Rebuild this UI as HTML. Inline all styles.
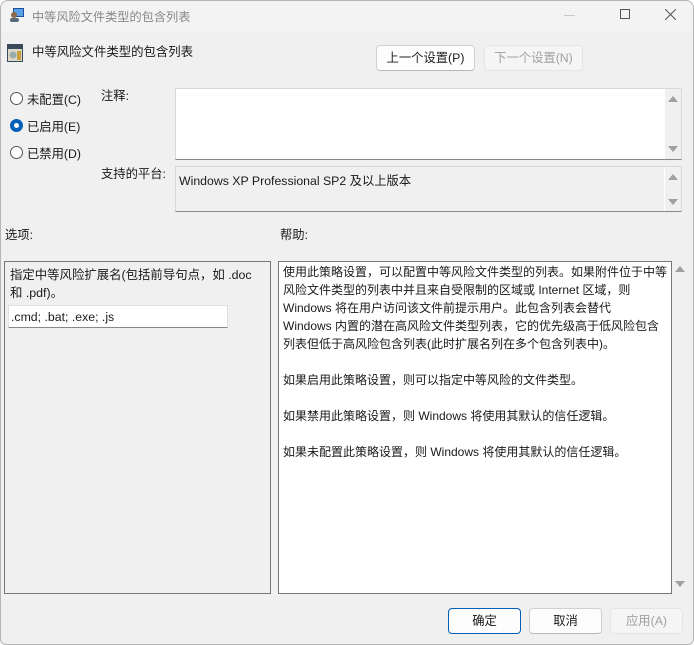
<!DOCTYPE html>
<html><head><meta charset="utf-8"><style>
*{box-sizing:border-box;margin:0;padding:0}
body{width:694px;height:645px;background:#fff;font-family:"Liberation Sans","Noto Sans CJK SC",sans-serif;font-size:12.3px;color:#1a1a1a;position:relative;overflow:hidden}
.win{position:absolute;left:0;top:0;width:694px;height:645px;background:#f0f0f0;border-radius:8px 8px 6px 6px;overflow:hidden}
.frame{position:absolute;left:0;top:0;width:694px;height:645px;border:1px solid #b5b5b5;border-radius:8px 8px 6px 6px}
.title{position:absolute;left:0;top:0;width:694px;height:31px;background:#f3f3f3}
.a{position:absolute;white-space:nowrap}
.btn{position:absolute;height:26px;border:1px solid #d0d0d0;border-bottom-color:#b8b8b8;border-radius:4px;background:#fdfdfd;text-align:center;line-height:24px;font-size:12.3px}
.dis{color:#a0a0a0;background:#f5f5f5;border-color:#e5e5e5}
.radio{position:absolute;left:10px;width:13px;height:13px;border:1px solid #555;border-radius:50%;background:#fff}
.box{position:absolute;border:1px solid #d9d9d9;border-bottom:1px solid #888}
.tri{position:absolute;width:0;height:0;border-left:5px solid transparent;border-right:5px solid transparent}
.up{border-bottom:6px solid #a0a0a0}.dn{border-top:6px solid #a0a0a0}
</style></head><body><div class="win">
<div class="title"></div>
<svg class="a" style="left:9px;top:7px" width="16" height="16"><rect x="4" y="1" width="11" height="9" fill="#1d4fa0"/><rect x="5" y="2" width="9" height="7" fill="#5aa0e8"/><circle cx="5" cy="8" r="3" fill="#8a6a4a"/><rect x="1" y="11" width="9" height="4" rx="2" fill="#5a6a7a"/></svg>
<div class="a" style="left:32px;top:7px;font-size:12.2px;color:#888">中等风险文件类型的包含列表</div>
<div class="a" style="left:564px;top:15px;width:11px;height:1px;background:#c8c8c8"></div>
<div class="a" style="left:620px;top:9px;width:10px;height:10px;border:1px solid #555"></div>
<svg class="a" style="left:665px;top:9px" width="11" height="11"><path d="M0 0L11 11M11 0L0 11" stroke="#555" stroke-width="1"/></svg>
<svg class="a" style="left:7px;top:44px" width="16" height="18"><rect x="0" y="0" width="16" height="18" fill="#3a4a5a"/><rect x="1" y="5" width="14" height="12" fill="#dcd8c8"/><circle cx="6" cy="11" r="3.5" fill="#9aa"/><rect x="10" y="7" width="4" height="9" fill="#c8a040"/></svg>
<div class="a" style="left:32px;top:42px;font-size:12.4px">中等风险文件类型的包含列表</div>
<div class="btn" style="left:376px;top:45px;width:99px">上一个设置(P)</div>
<div class="btn dis" style="left:484px;top:45px;width:99px">下一个设置(N)</div>
<div class="radio" style="top:92px"></div><div class="a" style="left:27px;top:90px">未配置(C)</div>
<div class="radio" style="top:119px;border:4px solid #005fb8"></div><div class="a" style="left:27px;top:117px">已启用(E)</div>
<div class="radio" style="top:146px"></div><div class="a" style="left:27px;top:144px">已禁用(D)</div>
<div class="a" style="left:101px;top:86px">注释:</div>
<div class="box" style="left:175px;top:88px;width:507px;height:72px;background:#fff"><div class="a" style="right:0;top:0;width:16px;height:70px;background:#f0f0f0"></div><div class="tri up" style="right:3px;top:7px"></div><div class="tri dn" style="right:3px;top:57px"></div></div>
<div class="a" style="left:101px;top:164px">支持的平台:</div>
<div class="box" style="left:175px;top:166px;width:507px;height:46px;background:#f0f0f0"><div class="a" style="left:3px;top:4px">Windows XP Professional SP2 及以上版本</div><div class="a" style="right:16px;top:0;width:1px;height:44px;background:#fff"></div><div class="tri up" style="right:3px;top:7px"></div><div class="tri dn" style="right:3px;top:32px"></div></div>
<div class="a" style="left:5px;top:225px">选项:</div>
<div class="a" style="left:280px;top:225px">帮助:</div>
<div class="a" style="left:4px;top:261px;width:267px;height:333px;border:1px solid #777;background:#f0f0f0"></div>
<div class="a" style="left:10px;top:266px;line-height:18px;font-size:12.4px">指定中等风险扩展名(包括前导句点，如 .doc<br>和 .pdf)。</div>
<div class="a" style="left:8px;top:305px;width:220px;height:23px;background:#fff;border:1px solid #e0e0e0;border-bottom-color:#888;padding:4px 2px">.cmd; .bat; .exe; .js</div>
<div class="a" style="left:278px;top:261px;width:394px;height:333px;border:1px solid #777;background:#fff"></div>
<div class="a" style="left:283px;top:263px;line-height:18px;font-size:12px">使用此策略设置，可以配置中等风险文件类型的列表。如果附件位于中等<br>风险文件类型的列表中并且来自受限制的区域或 Internet 区域，则<br>Windows 将在用户访问该文件前提示用户。此包含列表会替代<br>Windows 内置的潜在高风险文件类型列表，它的优先级高于低风险包含<br>列表但低于高风险包含列表(此时扩展名列在多个包含列表中)。<br><br>如果启用此策略设置，则可以指定中等风险的文件类型。<br><br>如果禁用此策略设置，则 Windows 将使用其默认的信任逻辑。<br><br>如果未配置此策略设置，则 Windows 将使用其默认的信任逻辑。</div>
<div class="tri up" style="left:675px;top:266px"></div>
<div class="tri dn" style="left:675px;top:581px"></div>
<div class="btn" style="left:448px;top:608px;width:73px;border:1px solid #005fb8">确定</div>
<div class="btn" style="left:529px;top:608px;width:73px">取消</div>
<div class="btn dis" style="left:610px;top:608px;width:73px">应用(A)</div>
</div><div class="frame"></div></body></html>
